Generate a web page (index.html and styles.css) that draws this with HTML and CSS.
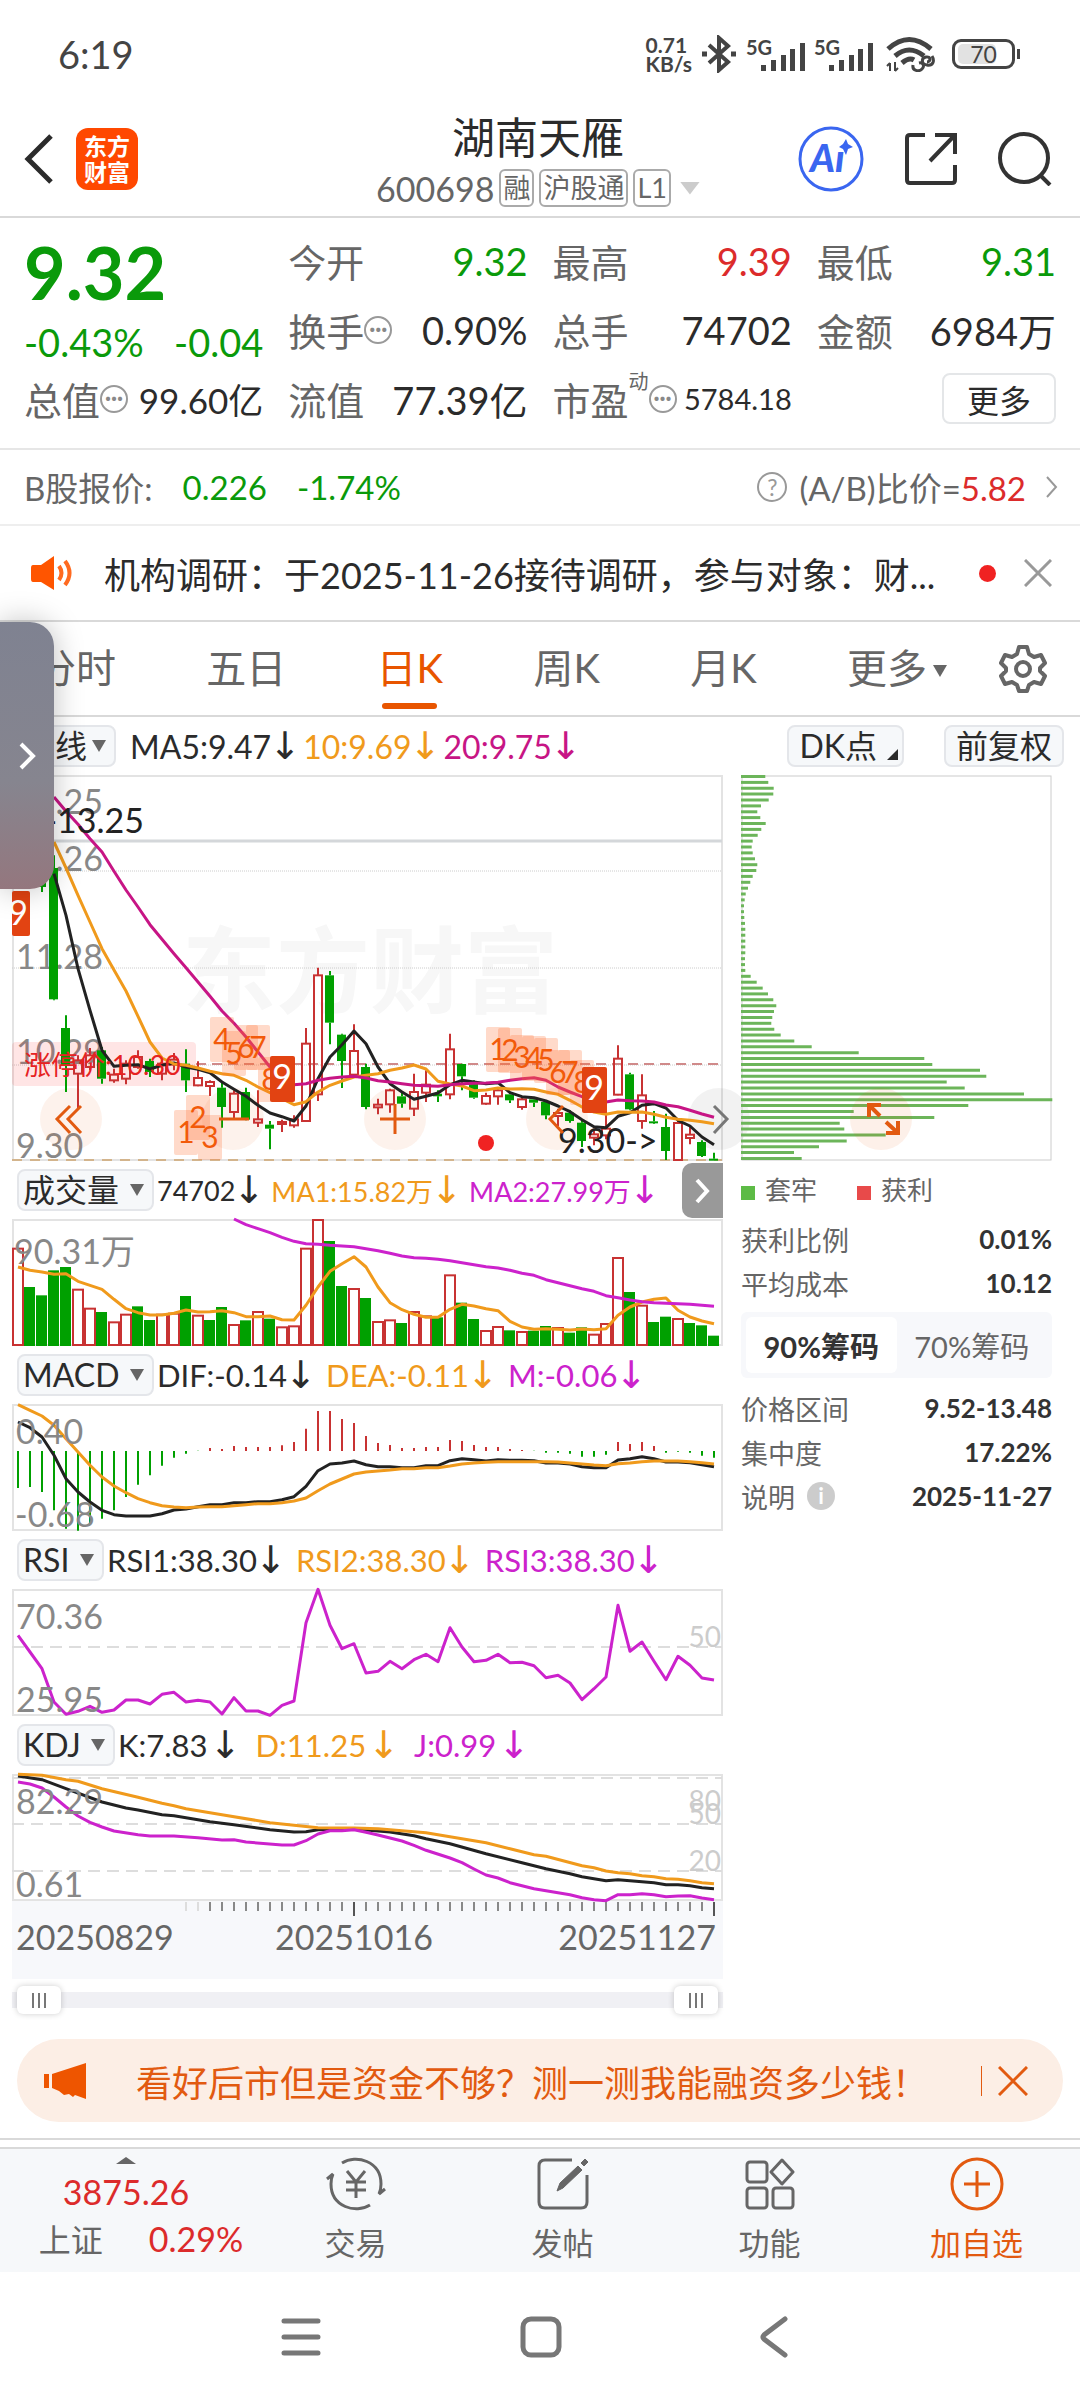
FILE: index.html
```html
<!DOCTYPE html>
<html lang="zh-CN">

<head>
    <meta charset="UTF-8">
    <meta name="viewport" content="width=device-width, initial-scale=1.0">
    <title>湖南天雁 600698</title>
    <link rel="stylesheet" href="styles.css">
</head>

<body>
    <!-- status bar -->
    <div class="status">
        <span class="status-time">6:19</span>
        <div class="status-icons">
            <span class="speed">0.71<br>KB/s</span>
            <svg width="36" height="38" viewBox="0 0 36 38" fill="none" stroke="#444" stroke-width="4">
                <path d="M8 10l19 17-9 8V3l9 8L8 28" />
                <path d="M1 19h5M30 19h5" stroke-width="5" />
            </svg>
            <span class="signal"><b>5G</b>
                <svg width="45" height="28" viewBox="0 0 45 28" fill="#444">
                    <path d="M0 22h5v6H0zM10 17h5v11h-5zM20 12h5v16h-5zM29 6h5v22h-5zM39 0h5v28h-5z" />
                </svg>
            </span>
            <span class="signal"><b>5G</b>
                <svg width="45" height="28" viewBox="0 0 45 28" fill="#444">
                    <path d="M0 22h5v6H0zM10 17h5v11h-5zM20 12h5v16h-5zM29 6h5v22h-5zM39 0h5v28h-5z" />
                </svg>
            </span>
            <svg class="wifi" width="49" height="36" viewBox="0 0 49 36" fill="none" stroke="#444">
                <path d="M2 13q21-19 43 0M9 20q14-12 29 0" stroke-width="5" />
                <path d="M16 27q7-6 12-3" stroke-width="5" />
                <path d="M4 27v8M9 35v-9M1 30l3-3M12 32l-3 3" stroke-width="2" />
                <path d="M46 20c3 5 1 10-5 9s-6-7-1-8 5 5 1 5M27 29c-1 6 6 7 9 4s1-7-3-6" stroke-width="3" />
            </svg>
            <span class="battery"><i></i><b>70</b></span>
        </div>
    </div>

    <!-- title bar -->
    <header class="topbar">
        <div class="topbar-side">
            <button class="icon-btn back" aria-label="返回">
                <svg width="30" height="50" viewBox="0 0 30 50" fill="none" stroke="#2b2b2b" stroke-width="5">
                    <path d="M27 2L4 25l23 23" />
                </svg>
            </button>
            <a class="logo" href="#">东方<br>财富</a>
        </div>
        <div class="stock">
            <h1>湖南天雁</h1>
            <div class="stock-code">
                <span>600698</span>
                <span class="tag">融</span>
                <span class="tag">沪股通</span>
                <span class="tag">L1</span>
                <i class="tri tri-light"></i>
            </div>
        </div>
        <div class="topbar-side topbar-actions">
            <button class="icon-btn ai" aria-label="AI">
                <svg width="66" height="66" viewBox="0 0 66 66">
                    <circle cx="33" cy="33" r="31" fill="none" stroke="#3a66f0" stroke-width="3" />
                    <text x="12" y="46" class="ai-text">Aı</text>
                    <path d="M48 13l2 5 5 3-5 2-2 6-3-6-4-2 4-3z" fill="#3a66f0" />
                </svg>
            </button>
            <button class="icon-btn" aria-label="分享">
                <svg width="54" height="54" viewBox="0 0 54 54" fill="none" stroke="#333" stroke-width="4">
                    <path d="M21 3H6q-3 0-3 3v42q0 3 3 3h42q3 0 3-3V33M31 3h20v19M50 4L26 29" />
                </svg>
            </button>
            <button class="icon-btn" aria-label="搜索">
                <svg width="54" height="54" viewBox="0 0 54 54" fill="none" stroke="#333" stroke-width="4">
                    <circle cx="26" cy="26" r="24" />
                    <path d="M42 43l10 10" />
                </svg>
            </button>
        </div>
    </header>

    <!-- quote -->
    <section class="quote">
        <div class="price">
            <strong>9.32</strong>
            <div class="price-change"><span>-0.43%</span><span>-0.04</span></div>
        </div>
        <div class="cell"><span>今开</span><b class="down">9.32</b></div>
        <div class="cell"><span>最高</span><b class="up">9.39</b></div>
        <div class="cell"><span>最低</span><b class="down">9.31</b></div>
        <div class="cell"><span>换手<i class="more-dot">···</i></span><b>0.90%</b></div>
        <div class="cell"><span>总手</span><b>74702</b></div>
        <div class="cell"><span>金额</span><b>6984万</b></div>
        <div class="cell"><span>总值<i class="more-dot">···</i></span><b class="mid">99.60亿</b></div>
        <div class="cell"><span>流值</span><b>77.39亿</b></div>
        <div class="cell"><span>市盈<sup>动</sup><i class="more-dot">···</i></span><b class="small">5784.18</b></div>
        <div class="cell cell-end"><button class="btn-more">更多</button></div>
    </section>

    <section class="bshare">
        <span>B股报价:</span>
        <span class="down">0.226</span>
        <span class="down">-1.74%</span>
        <a class="ratio" href="#">
            <i class="help">?</i>
            <span>(A/B)比价=<b class="up">5.82</b></span>
            <svg width="12" height="22" viewBox="0 0 12 22" fill="none" stroke="#999" stroke-width="2">
                <path d="M1 1l9 10-9 10" />
            </svg>
        </a>
    </section>

    <section class="news">
        <svg class="horn" width="42" height="34" viewBox="0 0 42 34">
            <path d="M2 9h8L23 0v34L10 26H2q-2 0-2-3V12q0-3 2-3z" fill="#ff5500" />
            <path d="M28 10q5 7 0 14M34 5q9 12 0 24" fill="none" stroke="#ff6a20" stroke-width="4" />
        </svg>
        <a class="news-text" href="#">机构调研：于2025-11-26接待调研，参与对象：财...</a>
        <i class="dot"></i>
        <button class="icon-btn" aria-label="关闭">
            <svg width="28" height="28" viewBox="0 0 28 28" fill="none" stroke="#999" stroke-width="3">
                <path d="M1 1l26 26M27 1L1 27" />
            </svg>
        </button>
    </section>

    <div class="tabs">
        <nav>
            <a href="#">分时</a>
            <a href="#">五日</a>
            <a class="active" href="#">日K</a>
            <a href="#">周K</a>
            <a href="#">月K</a>
            <a href="#">更多<i class="tri"></i></a>
        </nav>
        <button class="icon-btn" aria-label="设置">
            <svg width="48" height="48" viewBox="0 0 48 48" fill="none" stroke="#666" stroke-width="4" stroke-linejoin="round">
                <path d="M20 2h8l2 7 5 3 7-2 4 8-5 5v3l5 5-4 8-7-2-5 3-2 6h-8l-2-6-5-3-7 2-4-8 5-5v-3l-5-5 4-8 7 2 5-3z" />
                <circle cx="24" cy="24" r="7" />
            </svg>
        </button>
        <!-- floating drawer handle -->
        <button class="drawer" aria-label="展开">
            <svg width="18" height="28" viewBox="0 0 18 28" fill="none" stroke="#fff" stroke-width="4">
                <path d="M3 2l12 12L3 26" />
            </svg>
        </button>
    </div>

    <div class="ind-head ma-head">
        <label class="chip"><select aria-label="主图指标"><option>均线</option></select></label>
        <span class="val">MA5:9.47<i>↓</i></span>
        <span class="val orange">10:9.69<i>↓</i></span>
        <span class="val magenta">20:9.75<i>↓</i></span>
        <button class="chip-btn dk">DK点</button>
        <button class="chip-btn">前复权</button>
    </div>

    <main class="charts">
        <div class="left">
            <svg class="chart" viewBox="0 0 711 386">
                <rect class="frame" x="1" y="1" width="709" height="384" />
                <text class="watermark" x="170" y="231">东方财富</text>
                <path class="grid-heavy" d="M0 66H710" />
                <path class="grid-dot" d="M0 96H710M0 193H710M0 290H710" />
                <path class="grid-red" d="M184 289H710" />
                <path class="grid-tan" d="M0 385H710" />
                <g class="labels">
                    <text x="4" y="39">13.25</text>
                    <text x="4" y="96">12.26</text>
                    <text x="4" y="194">11.28</text>
                    <text x="4" y="289">10.29</text>
                    <text x="4" y="383">9.30</text>
                </g>
                <rect x="0" y="267" width="184" height="44" rx="4" fill="#f33" opacity=".13" />
                <g class="round">
                    <circle cx="59" cy="344" r="31" />
                    <circle cx="221" cy="344" r="31" />
                    <circle cx="383" cy="344" r="31" />
                    <circle cx="545" cy="344" r="31" />
                    <circle class="gray" cx="707" cy="344" r="31" />
                </g>
                <g id="price"></g>
                <g id="marks"></g>
                <text class="limit" x="12" y="300">涨停价:10.30</text>
                <text class="mark-text" x="132" y="58" text-anchor="end">&lt;-13.25</text>
                <text class="mark-text" x="546" y="378">9.30-&gt;</text>
                <circle cx="474" cy="368" r="8" fill="#f02222" />
                <g class="round-icons">
                    <path d="M58 331l-13 13 13 14M69 331l-13 13 13 14" />
                    <path d="M207 344h30" />
                    <path d="M368 344h30M383 329v30" />
                    <path d="M551 331l-13 13 13 14" />
                    <path class="gray" d="M702 331l13 13-13 14" />
                </g>
            </svg>

            <div class="ind-head vol-head">
                <label class="chip"><select aria-label="副图一"><option>成交量</option></select></label>
                <span class="val">74702<i>↓</i></span>
                <span class="val orange">MA1:15.82万<i>↓</i></span>
                <span class="val purple">MA2:27.99万<i>↓</i></span>
                <button class="expand" aria-label="展开">
                    <svg width="16" height="26" viewBox="0 0 16 26" fill="none" stroke="#fff" stroke-width="4">
                        <path d="M2 2l10 11L2 24" />
                    </svg>
                </button>
            </div>
            <svg class="chart" viewBox="0 0 711 127">
                <rect class="frame" x="1" y="1" width="709" height="125" />
                <g id="volume"></g>
                <text class="label" x="2" y="45">90.31万</text>
            </svg>

            <div class="ind-head">
                <label class="chip"><select aria-label="副图二"><option>MACD</option></select></label>
                <span class="val">DIF:-0.14<i>↓</i></span>
                <span class="val orange">DEA:-0.11<i>↓</i></span>
                <span class="val purple">M:-0.06<i>↓</i></span>
            </div>
            <svg class="chart" viewBox="0 0 711 127">
                <rect class="frame" x="1" y="1" width="709" height="125" />
                <g id="macd"></g>
                <text class="label" x="4" y="40">0.40</text>
                <text class="label" x="3" y="123">-0.68</text>
            </svg>

            <div class="ind-head">
                <label class="chip"><select aria-label="副图三"><option>RSI</option></select></label>
                <span class="val">RSI1:38.30<i>↓</i></span>
                <span class="val orange">RSI2:38.30<i>↓</i></span>
                <span class="val purple">RSI3:38.30<i>↓</i></span>
            </div>
            <svg class="chart" viewBox="0 0 711 127">
                <rect class="frame" x="1" y="1" width="709" height="125" />
                <path class="grid-dash" d="M0 58H710" />
                <g id="rsi"></g>
                <text class="label" x="4" y="40">70.36</text>
                <text class="label" x="4" y="123">25.95</text>
                <text class="label-right" x="709" y="58">50</text>
            </svg>

            <div class="ind-head kdj-head">
                <label class="chip"><select aria-label="副图四"><option>KDJ</option></select></label>
                <span class="val">K:7.83<i>↓</i></span>
                <span class="val orange">D:11.25<i>↓</i></span>
                <span class="val purple">J:0.99<i>↓</i></span>
            </div>
            <svg class="chart" viewBox="0 0 711 127">
                <rect class="frame" x="1" y="1" width="709" height="125" />
                <path class="grid-dash" d="M0 4H710M0 50H710M0 97H710" />
                <g id="kdj"></g>
                <text class="label" x="4" y="40">82.29</text>
                <text class="label" x="4" y="123">0.61</text>
                <text class="label-right" x="709" y="37">80</text>
                <text class="label-right" x="709" y="50">50</text>
                <text class="label-right" x="709" y="97">20</text>
            </svg>

            <svg class="chart axis" viewBox="0 0 711 78">
                <g id="ticks"></g>
                <text x="4" y="49">20250829</text>
                <text x="342" y="49" text-anchor="middle">20251016</text>
                <text x="704" y="49" text-anchor="end">20251127</text>
            </svg>

            <div class="range">
                <input type="range" min="0" max="100" value="0" aria-label="起始日期">
                <input type="range" min="0" max="100" value="100" aria-label="结束日期">
            </div>
        </div>

        <aside class="right">
            <svg class="chart" viewBox="0 0 311 386">
                <rect x="1" y="1" width="309" height="384" fill="none" stroke="#ccc" stroke-width="1" />
                <g id="chips"></g>
                <circle cx="140" cy="344" r="31" fill="#e9540a" opacity=".09" />
                <path d="M128 342v-12h12M128 330l11 11M157 346v12h-12M157 358l-12-11" fill="none" stroke="#e25a10" stroke-width="4" />
            </svg>
            <div class="legend">
                <span class="lg-green">套牢</span>
                <span class="lg-red">获利</span>
            </div>
            <dl class="stats">
                <div><dt>获利比例</dt><dd>0.01%</dd></div>
                <div><dt>平均成本</dt><dd>10.12</dd></div>
            </dl>
            <div class="toggle">
                <button class="on">90%筹码</button>
                <button>70%筹码</button>
            </div>
            <dl class="stats">
                <div><dt>价格区间</dt><dd>9.52-13.48</dd></div>
                <div><dt>集中度</dt><dd>17.22%</dd></div>
                <div><dt>说明<i class="info">i</i></dt><dd>2025-11-27</dd></div>
            </dl>
        </aside>
    </main>

    <section class="promo">
        <svg width="42" height="36" viewBox="0 0 42 36" fill="#ee5500">
            <path d="M0 11h5v14H0zM8 11L42 0v36l-11-4-2 2-4-3-5 1-5-4-7-3z" />
        </svg>
        <a href="#">看好后市但是资金不够？测一测我能融资多少钱！</a>
        <button class="icon-btn promo-close" aria-label="关闭">
            <svg width="30" height="30" viewBox="0 0 30 30" fill="none" stroke="#e25a10" stroke-width="3">
                <path d="M1 1l28 28M29 1L1 29" />
            </svg>
        </button>
    </section>

    <footer class="bottom">
        <a class="index" href="#">
            <i class="tri tri-up"></i>
            <b>3875.26</b>
            <span>上证<em>0.29%</em></span>
        </a>
        <a href="#">
            <svg width="60" height="54" viewBox="0 0 60 54" fill="none" stroke="#666" stroke-width="3">
                <path d="M16 6C30-3 55 4 55 27q0 6-2 10l6-5M44 48C30 57 5 50 5 27q0-6 2-10l-6 5" />
                <path d="M21 14l9 11 9-11M30 25v16M20 25h20M20 33h20" />
            </svg>
            交易
        </a>
        <a href="#">
            <svg width="54" height="54" viewBox="0 0 54 54" fill="none" stroke="#666" stroke-width="3">
                <path d="M36 3H9q-6 0-6 6v36q0 6 6 6h36q6 0 6-6V18" />
                <path d="M21 34l3-8L42 9l4 4-19 18zM45 6l4-4 3 3-4 4z" fill="#666" stroke-width="1" />
            </svg>
            发帖
        </a>
        <a href="#">
            <svg width="50" height="54" viewBox="0 0 50 54" fill="none" stroke="#666" stroke-width="3">
                <rect x="2" y="5" width="20" height="20" rx="3" />
                <rect x="2" y="31" width="20" height="20" rx="3" />
                <rect x="28" y="31" width="20" height="20" rx="3" />
                <path d="M37 3l11 12-11 12-11-12z" stroke-linejoin="round" />
            </svg>
            功能
        </a>
        <a class="accent" href="#">
            <svg width="54" height="54" viewBox="0 0 54 54" fill="none" stroke="#e25a10" stroke-width="3">
                <circle cx="27" cy="27" r="25" />
                <path d="M14 27h26M27 14v26" />
            </svg>
            加自选
        </a>
    </footer>

    <div class="sysnav">
        <button class="icon-btn" aria-label="最近任务">
            <svg width="40" height="38" viewBox="0 0 40 38" stroke="#777" stroke-width="5" stroke-linecap="round">
                <path d="M3 3h34M3 19h34M3 35h34" />
            </svg>
        </button>
        <button class="icon-btn" aria-label="主页">
            <svg width="42" height="42" viewBox="0 0 42 42" fill="none" stroke="#777" stroke-width="5">
                <rect x="3" y="3" width="36" height="36" rx="8" />
            </svg>
        </button>
        <button class="icon-btn" aria-label="后退">
            <svg width="28" height="42" viewBox="0 0 28 42" fill="none" stroke="#777" stroke-width="5" stroke-linecap="round">
                <path d="M25 3L4 19q-2 2 0 4l21 16" />
            </svg>
        </button>
    </div>

    <script src="charts.js"></script>
</body>

</html>
```

FILE: styles.css
```css
html {
    box-sizing: border-box;
    font-family: Lato, "Noto Sans CJK SC", sans-serif;
    font-size: 32px;
    color: #2b2b2b;
}

*,
*:before,
*:after {
    box-sizing: inherit;
}

body {
    margin: 0;
    background: #fff;
}

a {
    color: inherit;
    text-decoration: none;
}

i,
em {
    font-style: normal;
}

b,
em {
    font-weight: normal;
}

button,
select {
    font: inherit;
    color: inherit;
    border: 0;
    padding: 0;
    background: none;
}

svg {
    display: block;
    flex: none;
}

.icon-btn {
    display: block;
    flex: none;
}

.up {
    color: #dc2b2b;
}

.down {
    color: #0a9a0a;
}

.tri {
    display: inline-block;
    width: 14px;
    height: 12px;
    background: #666;
    clip-path: polygon(0 0, 100% 0, 50% 100%);
}

/******* status bar ********/
.status {
    display: flex;
    justify-content: space-between;
    align-items: center;
    height: 108px;
    padding: 0 65px 0 58px;
    color: #444;
}

.status-time {
    font-size: 38px;
}

.status-icons {
    display: flex;
    align-items: center;
    gap: 9px;
}

.speed {
    font-size: 21px;
    font-weight: bold;
    line-height: 19px;
}

.signal {
    display: flex;
    align-items: flex-end;
    width: 59px;
    height: 34px;
}

.signal b {
    align-self: flex-start;
    width: 15px;
    font-size: 20px;
    font-weight: bold;
    line-height: 20px;
}

.wifi {
    margin-left: 4px;
}

.battery {
    position: relative;
    display: flex;
    justify-content: center;
    align-items: center;
    width: 63px;
    height: 30px;
    margin-left: 8px;
    border: 3px solid #444;
    border-radius: 9px;
    font-size: 23px;
}

.battery i {
    position: absolute;
    inset: 2px 16px 2px 3px;
    border-radius: 5px;
    background: #e2e2e2;
}

.battery b {
    position: relative;
}

.battery:after {
    content: "";
    position: absolute;
    right: -8px;
    width: 3px;
    height: 10px;
    background: #444;
}

/******* title bar ********/
.topbar {
    display: grid;
    grid-template-columns: 1fr auto 1fr;
    align-items: center;
    height: 110px;
    padding: 0 28px 14px 24px;
    border-bottom: 2px solid #d9d9d9;
}

.topbar-side {
    display: flex;
    align-items: center;
    gap: 22px;
    padding-top: 2px;
}

.topbar-actions {
    justify-content: flex-end;
    gap: 40px;
}

.logo {
    width: 62px;
    height: 62px;
    padding-top: 5px;
    border-radius: 12px;
    background: #ff4800;
    color: #fff;
    font-size: 23px;
    font-weight: bold;
    line-height: 26px;
    text-align: center;
}

.stock {
    text-align: center;
}

h1 {
    margin: 0;
    font-size: 43px;
    font-weight: normal;
    line-height: 60px;
}

.stock-code {
    display: flex;
    align-items: center;
    gap: 5px;
    height: 40px;
    color: #666;
    font-size: 34px;
}

.tag {
    padding: 0 2px;
    border: 2px solid #aaa;
    border-radius: 6px;
    font-size: 27px;
    line-height: 34px;
}

.tri-light {
    width: 20px;
    height: 13px;
    margin-left: 4px;
    background: #ccc;
}

.ai-text {
    font: italic 900 38px Lato;
    fill: #3a66f0;
}

/******* quote ********/
.quote {
    display: grid;
    grid-template-columns: repeat(4, 1fr);
    grid-auto-rows: 69px;
    column-gap: 25px;
    padding: 8px 24px 15px;
    border-bottom: 2px solid #e6e6e6;
    font-size: 38px;
}

.price {
    grid-row: span 2;
    color: #0a9a0a;
}

.price strong {
    display: block;
    font-size: 72px;
    line-height: 92px;
}

.price-change {
    display: flex;
    justify-content: space-between;
    line-height: 48px;
}

.cell {
    display: flex;
    justify-content: space-between;
    align-items: center;
    white-space: nowrap;
}

.cell span {
    display: flex;
    align-items: center;
    color: #666;
}

.cell-end {
    justify-content: flex-end;
}

.cell .mid {
    font-size: 35px;
}

.cell .small {
    font-size: 29px;
}

.cell sup {
    align-self: flex-start;
    font-size: 20px;
    line-height: 20px;
}

.more-dot {
    width: 28px;
    height: 28px;
    border: 2px solid #999;
    border-radius: 50%;
    color: #888;
    font-size: 22px;
    font-weight: bold;
    line-height: 22px;
    text-align: center;
}

.btn-more {
    width: 114px;
    height: 51px;
    border: 2px solid #e4e6e8;
    border-radius: 8px;
    font-size: 32px;
}

.bshare {
    display: flex;
    align-items: center;
    gap: 30px;
    height: 76px;
    padding: 0 22px 0 24px;
    border-bottom: 2px solid #eee;
    color: #666;
    font-size: 33px;
}

.ratio {
    display: flex;
    align-items: center;
    gap: 12px;
    margin-left: auto;
}

.ratio svg {
    margin-left: 8px;
}

.help {
    width: 30px;
    height: 30px;
    border: 2px solid #999;
    border-radius: 50%;
    color: #999;
    font-size: 23px;
    line-height: 26px;
    text-align: center;
}

.news {
    display: flex;
    align-items: center;
    height: 96px;
    padding: 0 28px 0 31px;
    border-bottom: 2px solid #d9d9d9;
    font-size: 36px;
}

.news-text {
    flex: 1;
    min-width: 0;
    margin: 0 24px 0 31px;
    overflow: hidden;
    white-space: nowrap;
}

.dot {
    width: 17px;
    height: 17px;
    margin-right: 28px;
    border-radius: 50%;
    background: #f02222;
}

/******* tabs ********/
.tabs {
    position: relative;
    display: flex;
    align-items: center;
    height: 95px;
    padding: 0 33px 0 36px;
    border-bottom: 2px solid #d9d9d9;
    color: #666;
    font-size: 40px;
}

.tabs nav {
    display: flex;
    flex: 1;
    justify-content: space-between;
    margin-right: 52px;
}

.tabs nav a {
    position: relative;
    line-height: 93px;
}

.tabs .tri {
    margin-left: 6px;
    vertical-align: 6px;
}

.tabs .active {
    color: #e85500;
}

.tabs .active:after {
    content: "";
    position: absolute;
    left: 50%;
    bottom: 6px;
    width: 55px;
    height: 6px;
    margin-left: -28px;
    border-radius: 3px;
    background: #e85500;
}

.drawer {
    position: absolute;
    z-index: 2;
    left: 0;
    top: 0;
    display: flex;
    justify-content: center;
    align-items: center;
    width: 54px;
    height: 267px;
    border-radius: 0 24px 24px 0;
    background: linear-gradient(#7f8291 0%, #86858f 60%, #94777e 100%);
    box-shadow: 0 0 30px rgba(0, 0, 0, .25);
}

/******* indicator rows ********/
.ind-head {
    position: relative;
    display: flex;
    align-items: center;
    height: 58px;
    padding-left: 5px;
    font-size: 31px;
    white-space: nowrap;
}

.ma-head {
    padding: 0 16px 0 17px;
    font-size: 32px;
}

.vol-head {
    font-size: 27px;
}

.chip {
    display: flex;
    align-items: center;
    height: 42px;
    margin-right: 3px;
    padding: 0 8px 0 4px;
    border: 2px solid #e4e6ea;
    border-radius: 8px;
    background: #f6f8fa;
}

.chip select {
    appearance: none;
    font-size: 32px;
    line-height: 38px;
}

.chip:after {
    content: "";
    width: 14px;
    height: 12px;
    margin-left: 10px;
    background: #666;
    clip-path: polygon(0 0, 100% 0, 50% 100%);
}

.ma-head .chip {
    margin-right: 14px;
}

.ma-head .chip:after {
    margin-left: 4px;
}

.val {
    display: flex;
    align-items: center;
    margin-right: 15px;
}

.ma-head .val {
    margin-right: 8px;
}

.vol-head .val {
    margin-right: 12px;
}

.kdj-head .val {
    margin-right: 20px;
}

.val i {
    width: 20px;
    margin-left: 4px;
    font-family: "DejaVu Sans", sans-serif;
    font-size: 38px;
    line-height: 38px;
    text-indent: -6px;
}

.kdj-head .val i {
    margin-left: 8px;
}

.orange {
    color: #f09a1c;
}

.magenta {
    color: #c71585;
}

.purple {
    color: #cc22cc;
}

.chip-btn {
    position: relative;
    height: 42px;
    padding: 0 10px;
    border: 2px solid #e4e6ea;
    border-radius: 8px;
    background: #f6f8fa;
    line-height: 38px;
}

.chip-btn.dk {
    margin-left: auto;
    margin-right: 40px;
    padding-right: 25px;
}

.dk:after {
    content: "";
    position: absolute;
    right: 4px;
    bottom: 5px;
    width: 11px;
    height: 11px;
    background: #2b2b2b;
    clip-path: polygon(100% 0, 100% 100%, 0 100%);
}

.expand {
    position: absolute;
    right: 0;
    top: 2px;
    display: flex;
    justify-content: center;
    align-items: center;
    width: 41px;
    height: 55px;
    border-radius: 10px 0 0 10px;
    background: #999;
}

/******* charts ********/
.charts {
    display: grid;
    grid-template-columns: minmax(0, 711fr) minmax(0, 311fr);
    column-gap: 18px;
    padding: 0 28px 0 12px;
}

.chart {
    width: 100%;
    height: auto;
    overflow: visible;
}

.chart text {
    font-size: 34px;
}

.frame {
    fill: none;
    stroke: #e3e3e3;
    stroke-width: 2;
}

.chart .watermark {
    font-size: 94px;
    font-weight: bold;
    fill: #f7f7f7;
}

.grid-heavy {
    stroke: #d4d7da;
    stroke-width: 3;
}

.grid-dot {
    stroke: #ccc;
    stroke-dasharray: 1 1;
}

.grid-red {
    stroke: #d08a8a;
    stroke-width: 2;
    stroke-dasharray: 10 6;
}

.grid-tan {
    stroke: #d3b48c;
    stroke-width: 2;
    stroke-dasharray: 10 8;
}

.grid-dash {
    stroke: #ddd;
    stroke-width: 2;
    stroke-dasharray: 12 7;
}

.labels text,
.label {
    fill: #888;
}

.chart .label-right {
    font-size: 28px;
    fill: #ccc;
    text-anchor: end;
}

.mark-text {
    fill: #222;
}

.chart .limit {
    font-size: 27px;
    fill: #e62222;
}

.round circle {
    fill: #e9540a;
    opacity: .08;
}

.round .gray {
    fill: #000;
    opacity: .05;
}

.round-icons path {
    fill: none;
    stroke: #e25a10;
    stroke-width: 3;
}

.round-icons .gray {
    stroke: #777;
}

.line {
    fill: none;
    stroke-width: 3;
    stroke-linejoin: round;
}

.chart .count {
    font-size: 30px;
    fill: #f25a0a;
    text-anchor: middle;
}

.chart .count-nine {
    font-size: 34px;
    fill: #fff;
    text-anchor: middle;
}

.axis {
    background: #f7f8fb;
}

.axis text {
    fill: #666;
}

.range {
    display: grid;
    align-items: center;
    height: 42px;
    background: linear-gradient(#f0f0f4, #f0f0f4) center / 100% 16px no-repeat;
}

.range input {
    grid-area: 1 / 1;
    appearance: none;
    height: 28px;
    margin: 0 5px;
    background: none;
    pointer-events: none;
}

.range input::-webkit-slider-thumb {
    appearance: none;
    width: 44px;
    height: 28px;
    border-radius: 6px;
    background:
        linear-gradient(#777, #777) 15px 50% / 2px 15px no-repeat,
        linear-gradient(#777, #777) 21px 50% / 2px 15px no-repeat,
        linear-gradient(#777, #777) 27px 50% / 2px 15px no-repeat,
        #fff;
    box-shadow: 0 0 6px rgba(0, 0, 0, .2);
    pointer-events: auto;
}

/******* chip distribution ********/
.legend {
    display: flex;
    gap: 40px;
    height: 56px;
    color: #666;
    font-size: 26px;
    line-height: 58px;
}

.legend span:before {
    content: "";
    display: inline-block;
    width: 14px;
    height: 14px;
    margin-right: 10px;
    background: #5dbb46;
}

.legend .lg-red:before {
    background: #e84a4a;
}

.stats {
    margin: 0;
    font-size: 27px;
}

.stats div {
    display: flex;
    justify-content: space-between;
    align-items: center;
    height: 44px;
}

.stats dt {
    display: flex;
    align-items: center;
    color: #666;
}

.stats dd {
    margin: 0;
    color: #333;
    font-size: 26px;
    font-weight: bold;
}

.info {
    width: 28px;
    height: 28px;
    margin-left: 12px;
    border-radius: 50%;
    background: #ccc;
    color: #fff;
    font-size: 22px;
    font-weight: bold;
    line-height: 27px;
    text-align: center;
}

.toggle {
    display: grid;
    grid-template-columns: 1fr 1fr;
    height: 66px;
    margin: 7px 0 8px;
    padding: 5px;
    border-radius: 6px;
    background: #f7f8fb;
    color: #666;
    font-size: 29px;
    white-space: nowrap;
}

.toggle .on {
    border-radius: 6px;
    background: #fff;
    color: #333;
    font-weight: bold;
}

/******* bottom ********/
.promo {
    display: flex;
    align-items: center;
    height: 83px;
    margin: 18px 17px 16px;
    padding: 0 35px 0 27px;
    border-radius: 42px;
    background: #fceee5;
    color: #e25a10;
    font-size: 36px;
}

.promo a {
    margin-left: 50px;
    white-space: nowrap;
}

.promo-close {
    margin-left: auto;
    padding-left: 16px;
    border-left: 1px solid #e25a10;
}

.bottom {
    display: grid;
    grid-template-columns: 252fr repeat(4, 207fr);
    height: 134px;
    padding-top: 9px;
    border-top: 2px solid #d9d9d9;
    background: linear-gradient(#fff 7px, #d9d9d9 7px, #d9d9d9 9px, #f6f8fa 9px);
    color: #666;
    font-size: 31px;
}

.bottom a {
    display: flex;
    flex-direction: column;
    align-items: center;
    padding-top: 8px;
    line-height: 64px;
}

.bottom .index {
    padding-top: 8px;
    line-height: 38px;
}

.index b {
    color: #dc2b2b;
    font-size: 34px;
    line-height: 56px;
}

.index span {
    padding-left: 30px;
    font-size: 32px;
}

.index em {
    margin-left: 46px;
    color: #dc2b2b;
    font-size: 34px;
}

.tri-up {
    width: 20px;
    height: 7px;
    clip-path: polygon(0 100%, 100% 100%, 50% 0);
}

.bottom .accent {
    color: #e25a10;
}

.sysnav {
    display: flex;
    justify-content: space-between;
    align-items: center;
    height: 130px;
    padding: 0 27% 0 26%;
}
```

FILE: charts.js
```js
const d = document,
    GREEN = "#00a000",
    RED = "#c83232",
    BLACK = "#222",
    ORANGE = "#f09a1c",
    MAGENTA = "#c71585",
    PURPLE = "#cc22cc"

// every day is 12 units wide
const dayX = i => 6 + i * 12

function add(id, tag, attrs, text) {
    const el = d.createElementNS("http://www.w3.org/2000/svg", tag)
    for (const k in attrs) el.setAttribute(k, attrs[k])
    if (text) el.textContent = text
    d.getElementById(id).appendChild(el)
}

// levels are stored at three steps per unit, counted from base
function line(id, base, color, points, start = 0) {
    const pts = points.map((p, n) => {
        const [i, v] = Array.isArray(p) ? p : [start + n, p]
        return dayX(i) + "," + ((v - base) / 3).toFixed(1)
    })
    add(id, "polyline", { class: "line", stroke: color, points: pts.join(" ") })
}

/******* candles ********/
// up(1)/down(0), high, body top, body bottom, low
const candles = [
    [0, 300, 320, 375, 390], [0, 280, 318, 712, 715], [0, 760, 798, 910, 990],
    [1, 880, 895, 935, 1040], [1, 858, 880, 915, 925], [0, 855, 865, 950, 965], [1, 920, 938, 955, 962],
    [1, 895, 905, 950, 967], [1, 865, 885, 915, 920], [0, 890, 897, 930, 945], [1, 885, 905, 935, 955],
    [1, 873, 893, 908, 925], [0, 862, 905, 955, 990], [1, 898, 948, 970, 973], [1, 955, 960, 972, 1002],
    [0, 962, 977, 1035, 1097], [1, 985, 995, 1050, 1068], [0, 977, 990, 1073, 1075], [1, 985, 1072, 1082, 1095],
    [0, 1077, 1088, 1100, 1162], [1, 1073, 1080, 1086, 1110], [1, 1060, 1072, 1090, 1097], [1, 798, 845, 1077, 1080],
    [1, 617, 640, 997, 1017], [0, 627, 640, 782, 847], [0, 815, 818, 897, 978], [1, 787, 867, 938, 945],
    [0, 905, 915, 1035, 1042], [1, 1010, 1028, 1036, 1057], [1, 980, 985, 1027, 1052], [0, 990, 1003, 1025, 1037],
    [1, 935, 990, 1040, 1062], [1, 925, 968, 992, 1020], [0, 985, 995, 1003, 1020], [1, 815, 862, 997, 1012],
    [0, 905, 906, 943, 985], [0, 955, 965, 1007, 1010], [1, 992, 1002, 1025, 1028], [1, 980, 985, 1003, 1028],
    [0, 990, 997, 1015, 1023], [1, 1005, 1012, 1035, 1043], [0, 1005, 1012, 1022, 1035], [0, 1018, 1020, 1060, 1072],
    [1, 1040, 1053, 1062, 1092], [0, 1045, 1052, 1077, 1082], [0, 1075, 1082, 1137, 1155], [1, 1100, 1117, 1127, 1150],
    [1, 1045, 1100, 1120, 1132], [1, 850, 890, 998, 1000], [0, 932, 937, 1042, 1045], [1, 937, 1000, 1077, 1100],
    [0, 1047, 1078, 1084, 1086], [0, 1055, 1095, 1167, 1194], [1, 1075, 1083, 1194, 1194], [1, 1095, 1118, 1128, 1147],
    [0, 1135, 1140, 1182, 1185], [0, 1172, 1190, 1194, 1194]
]

candles.forEach(([up, high, top, bottom, low], n) => {
    const x = dayX(n + 2),
        y = v => (v - 39) / 3,
        color = up ? RED : GREEN
    add("price", "path", { d: `M${x} ${y(high)}V${y(top)}M${x} ${y(bottom)}V${y(low)}`, stroke: color, "stroke-width": 2 })
    if (up) {
        add("price", "rect", {
            x: x - 4, y: y(top), width: 8, height: Math.max(y(bottom) - y(top), 1),
            fill: "none", stroke: RED, "stroke-width": 2
        })
    } else {
        add("price", "rect", { x: x - 5, y: y(top), width: 9, height: Math.max(y(bottom) - y(top), 2), fill: GREEN })
    }
})

line("price", 39, BLACK, [335, 460, 620, 745, 865, 913, 910, 908, 921, 910, 903, 915, 922, 932, 960, 982, 1003, 1030,
    1053, 1064, 1077, 1032, 950, 885, 848, 807, 845, 915, 965, 990, 1012, 1003, 993, 968, 955, 960, 965, 962, 992, 1004,
    1007, 1017, 1032, 1049, 1073, 1094, 1097, 1063, 1052, 1030, 1025, 1038, 1075, 1092, 1125, 1148], 3)
line("price", 39, ORANGE, [240, 318, 400, 480, 560, 624, 687, 763, 840, 888, 906, 910, 918, 928, 935, 940, 955, 975,
    992, 1010, 1028, 1019, 990, 970, 957, 945, 940, 935, 925, 918, 909, 921, 958, 966, 972, 986, 984, 978, 981, 980,
    982, 990, 997, 1015, 1035, 1050, 1057, 1050, 1051, 1050, 1057, 1066, 1072, 1075, 1079, 1085], 3)
line("price", 39, MAGENTA, [105, 148, 187, 230, 270, 328, 384, 435, 488, 532, 575, 617, 660, 703, 747, 784, 825, 870,
    915, 950, 968, 965, 955, 949, 945, 943, 948, 956, 960, 965, 970, 971, 973, 968, 965, 964, 963, 961, 955, 950,
    947, 955, 975, 990, 1004, 1012, 1020, 1014, 1016, 1017, 1020, 1029, 1034, 1045, 1056, 1066], 3)

// nine-turn counters: day, baseline, number
const counts = [
    [14, 368, 1], [15, 353, 2], [16, 373, 3],
    [17, 275, 4], [18, 289, 5], [19, 283, 6], [20, 283, 7], [21, 315, 8],
    [40, 285, 1], [41, 286, 2], [42, 293, 3], [43, 294, 4], [44, 296, 5], [45, 308, 6], [46, 308, 7], [47, 318, 8]
]
counts.forEach(([i, y, n]) => {
    add("marks", "rect", { x: dayX(i) - 12, y: y - 33, width: 24, height: 45, rx: 2, fill: "#ff6a2a", opacity: .25 })
})
counts.forEach(([i, y, n]) => add("marks", "text", { class: "count", x: dayX(i), y: y }, n))

add("marks", "rect", { x: 0, y: 116, width: 18, height: 45, rx: 2, fill: "#e24312" })
add("marks", "text", { class: "count-nine", x: 6, y: 150 }, 9)
const nines = [[22, 281], [48, 292]]
nines.forEach(([i, y]) => {
    add("marks", "rect", { x: dayX(i) - 12, y: y, width: 25, height: 46, rx: 2, fill: "#e24312" })
    add("marks", "text", { class: "count-nine", x: dayX(i), y: y + 33 }, 9)
})

/******* volume ********/
const up = new Set([0, 5, 6, 8, 9, 12, 13, 15, 18, 20, 22, 23, 24, 25, 28, 30, 31, 33, 34, 36, 39, 40, 42, 45, 48, 49, 50, 52, 55])
const volume = [257, 375, 400, 325, 315, 380, 437, 450, 478, 455, 433, 474, 455, 452, 402, 458, 474, 435, 486, 475, 447,
    470, 493, 490, 257, 171, 237, 372, 378, 408, 477, 472, 483, 447, 460, 466, 337, 422, 471, 504, 492, 505, 507, 506,
    492, 495, 512, 496, 515, 483, 285, 390, 428, 480, 464, 468, 483, 490, 521]
volume.forEach((v, i) => {
    const y = (v - 171) / 3
    if (up.has(i)) {
        add("volume", "rect", {
            x: dayX(i) - 5, y: y + 1, width: 10, height: 125 - y,
            fill: "#fff", stroke: RED, "stroke-width": 2
        })
    } else {
        add("volume", "rect", { x: dayX(i) - 6, y: y, width: 11, height: 127 - y, fill: GREEN })
    }
})
line("volume", 171, ORANGE, [315, 325, 330, 337, 335, 358, 370, 382, 412, 440, 452, 459, 459, 454, 444, 450, 449, 446,
    452, 464, 464, 462, 473, 474, 430, 375, 328, 305, 284, 315, 375, 422, 443, 457, 466, 466, 442, 427, 432, 440, 446,
    478, 495, 502, 500, 502, 504, 501, 503, 500, 460, 435, 420, 412, 408, 445, 465, 477, 485])
line("volume", 171, PURPLE, [171, 188, 200, 212, 226, 238, 245, 247, 250, 252, 254, 260, 266, 274, 282, 287, 289, 292,
    296, 302, 308, 314, 318, 325, 334, 340, 353, 362, 371, 380, 388, 401, 407, 414, 419, 422, 424, 425, 427, 430, 433], 18)

/******* MACD ********/
const macd = [978, 975, 990, 1045, 1100, 1106, 1085, 1070, 1045, 1005, 968, 940, 911, 887, 875, 866, 858, 861, 852, 855,
    855, 855, 850, 840, 800, 747, 747, 771, 783, 822, 843, 849, 858, 858, 855, 855, 834, 837, 849, 855, 855, 861, 864,
    866, 872, 872, 875, 884, 884, 878, 840, 846, 840, 852, 872, 869, 872, 881, 887]
macd.forEach((v, i) => {
    add("macd", "path", {
        d: `M${dayX(i)} 47V${(v - 726) / 3}`,
        stroke: v < 866 ? RED : GREEN, "stroke-width": 2
    })
})
line("macd", 726, BLACK, [780, 797, 825, 880, 950, 990, 1020, 1045, 1058, 1062, 1062, 1062, 1055, 1044, 1041, 1034,
    1028, 1028, 1022, 1022, 1019, 1019, 1013, 1004, 973, 926, 906, 903, 897, 908, 914, 914, 917, 917, 911, 911, 896,
    890, 893, 897, 893, 895, 895, 896, 903, 903, 906, 914, 917, 917, 894, 890, 884, 890, 900, 900, 902, 908, 914])
line("macd", 726, ORANGE, [728, 745, 762, 790, 830, 870, 910, 945, 972, 992, 1010, 1022, 1031, 1035, 1037, 1035, 1034,
    1034, 1031, 1028, 1025, 1025, 1022, 1017, 1008, 986, 966, 951, 936, 930, 927, 924, 920, 920, 917, 917, 912, 906,
    903, 901, 899, 899, 899, 899, 899, 900, 903, 906, 909, 911, 905, 903, 899, 897, 897, 897, 899, 902, 906])

/******* RSI ********/
line("rsi", 171, PURPLE, [310, 360, 410, 510, 547, 538, 523, 541, 534, 504, 504, 516, 487, 481, 510, 505, 510, 546, 497,
    537, 537, 550, 520, 507, 272, 172, 280, 350, 335, 423, 418, 388, 410, 383, 367, 389, 287, 345, 389, 385, 367, 392,
    391, 401, 437, 430, 453, 503, 470, 435, 220, 358, 330, 388, 443, 373, 400, 438, 444])

/******* KDJ ********/
line("kdj", 726, BLACK, [[0, 732], [2, 743], [4, 770], [7, 810], [9, 828], [10, 834], [12, 848], [13, 851], [16, 869],
    [18, 878], [21, 893], [23, 900], [24, 899], [25, 893], [28, 891], [31, 900], [33, 911], [34, 920], [36, 935],
    [39, 965], [42, 992], [44, 1010], [46, 1025], [47, 1034], [49, 1046], [50, 1043], [53, 1052], [54, 1058],
    [55, 1058], [56, 1061], [57, 1067], [58, 1070]])
line("kdj", 726, ORANGE, [[0, 727], [2, 730], [4, 743], [5, 748], [7, 770], [10, 796], [12, 814], [13, 821], [14, 830],
    [17, 848], [21, 872], [25, 887], [28, 888], [30, 890], [32, 896], [34, 902], [36, 914], [39, 932], [41, 950],
    [43, 968], [44, 973], [47, 1001], [48, 1007], [49, 1017], [50, 1022], [51, 1025], [52, 1031], [53, 1034],
    [54, 1040], [55, 1042], [56, 1046], [57, 1052], [58, 1055]])
line("kdj", 726, PURPLE, [[0, 750], [1, 756], [2, 768], [3, 795], [4, 825], [5, 852], [6, 871], [7, 885], [8, 897],
    [10, 908], [11, 912], [13, 912], [15, 917], [17, 924], [18, 923], [19, 930], [22, 939], [23, 939], [24, 926],
    [25, 906], [26, 896], [27, 896], [28, 893], [29, 901], [30, 909], [32, 927], [33, 940], [34, 955], [36, 978],
    [37, 992], [38, 1011], [39, 1029], [40, 1038], [41, 1052], [43, 1070], [45, 1082], [46, 1088], [47, 1097],
    [48, 1103], [49, 1106], [50, 1088], [51, 1088], [52, 1085], [53, 1088], [54, 1094], [55, 1092], [56, 1091],
    [57, 1098], [58, 1103]])

/******* date ticks ********/
for (let i = 14; i < 59; i++) {
    const long = i === 28 || i === 58
    add("ticks", "path", {
        d: `M${dayX(i)} 1V${long ? 15 : 10}`,
        stroke: long ? "#555" : i < 16 ? "#ddd" : "#888", "stroke-width": 2
    })
}

/******* chip distribution ********/
const chips = [134, 143, 159, 158, 144, 121, 110, 119, 135, 122, 111, 96, 93, 96, 103, 110, 107, 96, 89, 82, 75, 72, 70,
    70, 71, 73, 74, 74, 74, 74, 74, 73, 73, 74, 90, 108, 126, 142, 158, 167, 160, 155, 152, 161, 180, 221, 273, 414, 611,
    635, 778, 797, 678, 732, 910, 995, 743, 399, 641, 357, 371, 495, 378, 295, 220, 243]
chips.forEach((v, i) => {
    add("chips", "path", { d: `M0 ${(1.5 + i * 5.877).toFixed(1)}h${((v - 61) / 3).toFixed(1)}`, stroke: "#6cb55a", "stroke-width": 3 })
})
```
